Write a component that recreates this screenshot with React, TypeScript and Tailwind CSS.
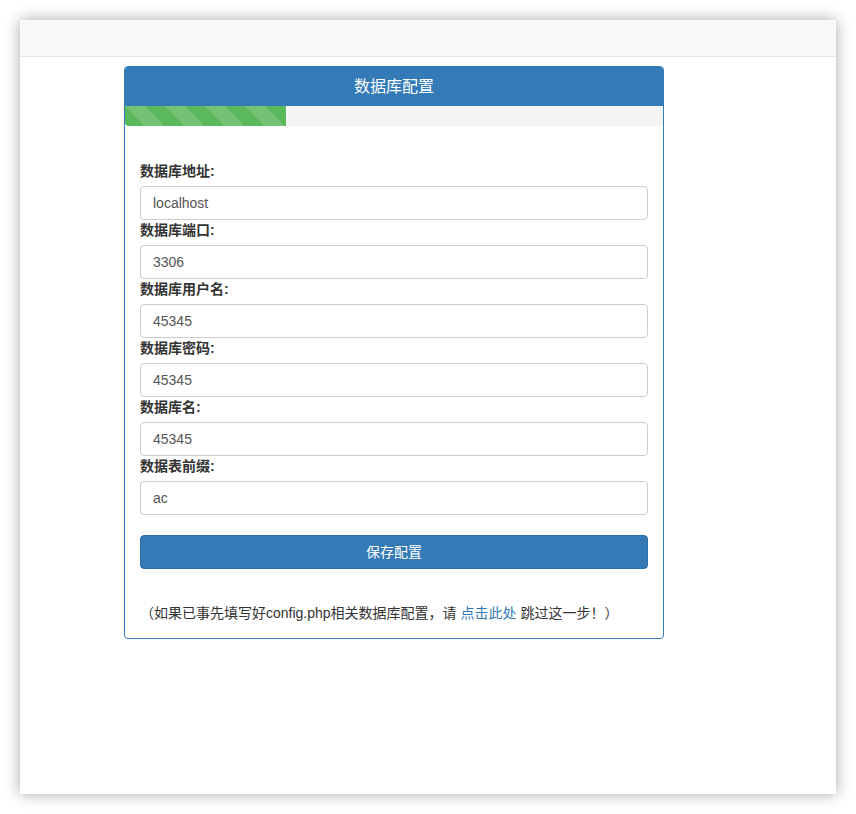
const fields = [
  { label: "数据库地址:", value: "localhost" },
  { label: "数据库端口:", value: "3306" },
  { label: "数据库用户名:", value: "45345" },
  { label: "数据库密码:", value: "45345" },
  { label: "数据库名:", value: "45345" },
  { label: "数据表前缀:", value: "ac" },
];

export default function App() {
  return (
    <div
      className="w-[856px] h-[814px] bg-white p-[20px] text-[14px] text-[#333]"
      style={{ fontFamily: '"Liberation Sans", "Noto Sans CJK SC", sans-serif' }}
    >
      <div className="h-[774px] bg-white shadow-[0_0_14px_rgba(0,0,0,0.35)] flex flex-col">
        {/* Navbar */}
        <div className="h-[37px] bg-[#f8f8f8] border-b border-[#e7e7e7] shrink-0" />

        {/* Panel */}
        <div className="mt-[9px] ml-[104px] w-[540px] border border-[#337ab7] rounded-[4px] overflow-hidden">
          <div className="h-[39px] bg-[#337ab7] text-white text-[16px] flex items-center justify-center">
            数据库配置
          </div>
          <div className="h-[20px] bg-[#f5f5f5]">
            <div className="h-full w-[30%] bg-[#5cb85c] rounded-bl-[4px] bg-[linear-gradient(45deg,rgba(255,255,255,.15)_25%,transparent_25%,transparent_50%,rgba(255,255,255,.15)_50%,rgba(255,255,255,.15)_75%,transparent_75%,transparent)] bg-[length:40px_40px]" />
          </div>

          <div className="px-[15px] pt-[35px] pb-[15px]">
            {fields.map((f) => (
              <div key={f.label}>
                <label className="block font-bold leading-[20px] mb-[5px]">{f.label}</label>
                <input
                  defaultValue={f.value}
                  className="block w-full h-[34px] px-[12px] border border-[#ccc] rounded-[4px] text-[#555] text-[14px] outline-none"
                />
              </div>
            ))}

            <button className="mt-[20px] w-full h-[34px] bg-[#337ab7] border border-[#2e6da4] rounded-[4px] text-white text-[14px]">
              保存配置
            </button>

            <p className="mt-[34px] leading-[20px]">
              （如果已事先填写好config.php相关数据库配置，请 <a className="text-[#337ab7]">点击此处</a> 跳过这一步！）
            </p>
          </div>
        </div>
      </div>
    </div>
  );
}
